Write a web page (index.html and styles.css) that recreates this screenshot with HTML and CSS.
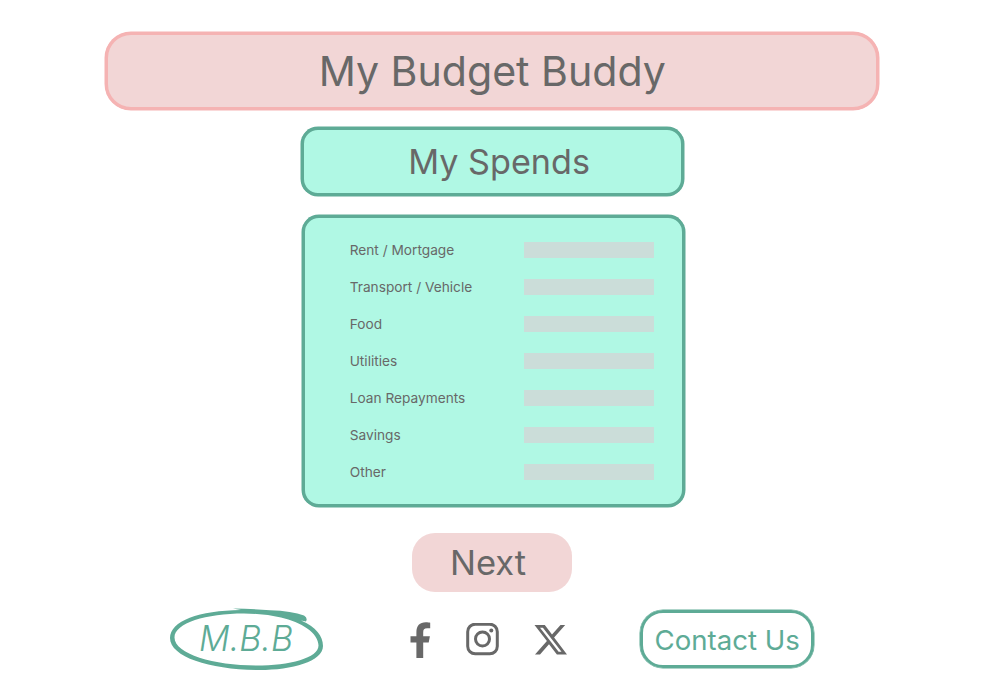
FILE: index.html
```html
<!DOCTYPE html>
<html lang="en">
<head>
<meta charset="utf-8">
<title>My Budget Buddy</title>
<link rel="stylesheet" href="styles.css">
</head>
<body>
<header class="banner"><h1>My Budget Buddy</h1></header>
<main>
  <h2 class="heading">My Spends</h2>
  <form class="panel">
    <label class="row"><span>Rent / Mortgage</span><input class="field" type="text"></label>
    <label class="row"><span>Transport / Vehicle</span><input class="field" type="text"></label>
    <label class="row"><span>Food</span><input class="field" type="text"></label>
    <label class="row"><span>Utilities</span><input class="field" type="text"></label>
    <label class="row"><span>Loan Repayments</span><input class="field" type="text"></label>
    <label class="row"><span>Savings</span><input class="field" type="text"></label>
    <label class="row"><span>Other</span><input class="field" type="text"></label>
  </form>
  <button class="next" type="button">Next</button>
</main>
<footer class="footer">
  <svg class="logo" width="156" height="66" viewBox="168 606 156 66">
    <path class="ring" fill-rule="evenodd" d="M233 608.5 Q252 608.7 270 610.3 Q292 611 304 615.5 Q308 618 306 621.5 L301 620.5 C316 627 323 636 323 646 C323 662 290 670.5 257 670 C210 669.5 170 657 170 638 C170 621 199 610.5 241 610 Z M244 613.500 C206 613.500 174.500 623 174.500 637.500 C174.500 654 214 665.500 256 665.500 C290 665.500 318.500 658 318.500 645.500 C318.500 633 301 622 281 617.500 Q264 613.500 244 613.500 Z"/>
    <text class="initials" x="199" y="651" textLength="94" lengthAdjust="spacingAndGlyphs">M.B.B</text>
  </svg>
  <nav class="social">
    <svg width="22" height="36" viewBox="0 0 22 36"><path d="M6.400 36V20.600H.5v-6.300h5.900v-4C6.400 3.700 9.600.3 15.800.3c1.800 0 3.500.2 4.400.4v5.500h-3c-3.100 0-4 1.400-4 4.200v3.900h6.700l-1.200 6.300h-5.500V36z"/></svg>
    <svg width="34" height="34" viewBox="0 0 34 34" class="outline"><rect x="1.700" y="1.200" width="29.600" height="29.600" rx="7.500"/><circle cx="16.500" cy="16" r="7"/><circle class="dot" cx="25.300" cy="7.500" r="2"/></svg>
    <svg width="34" height="32" viewBox="0 0 34 32"><path fill-rule="evenodd" d="M.5 1H10.800L18 10.600 26.500 1H31.200L20.100 13.500 33 30.500H22.900L15 20.200 6 30.500H1L12.900 17zM6 3.800 24.600 27.700H27.500L8.900 3.800z"/></svg>
  </nav>
  <a class="contact">Contact Us</a>
</footer>
</body>
</html>
```
FILE: styles.css
```css
* { box-sizing: border-box; }
body {
  margin: 0;
  padding-top: 32px;
  background: #fff;
  color: #686868;
  font-family: Inter, sans-serif;
  font-weight: 400;
}
h1, h2 { margin: 0; font-weight: 400; }
.banner {
  width: 774px;
  height: 77.500px;
  margin-left: 105.300px;
  border: 3px solid #f5b3b3;
  border-radius: 26px;
  box-shadow: 0 0 0 .5px #f5b3b3;
  background: #f2d6d6;
  display: flex;
  align-items: center;
  justify-content: center;
}
.banner h1 { font-size: 41.100px; line-height: 50px; }
main { display: flex; flex-direction: column; align-items: flex-start; }
.heading {
  width: 383px;
  height: 69px;
  margin: 17.500px 0 0 300.600px;
  border: 3px solid #5eab96;
  border-radius: 17px;
  box-shadow: 0 0 0 .5px #5eab96;
  background: #b0f8e4;
  font-size: 34.200px;
  line-height: 63px;
  padding-left: 14px;
  text-align: center;
}
.panel {
  width: 383px;
  height: 291.500px;
  margin: 19px 0 0 301.500px;
  border: 3px solid #5eab96;
  border-radius: 17px;
  box-shadow: 0 0 0 .5px #5eab96;
  background: #b0f8e4;
  padding: 13px 27.500px 0 45.200px;
}
.row {
  height: 37px;
  display: flex;
  align-items: center;
  justify-content: space-between;
  font-size: 13.700px;
}
.row span { padding-top: .5px; }
.field {
  width: 130.500px;
  height: 16px;
  border: 0;
  padding: 0 4px;
  background: #cbddd9;
}
.next {
  width: 160px;
  height: 59px;
  margin: 26px 0 0 412px;
  padding: 0 8px 0 0;
  border: 0;
  border-radius: 23px;
  background: #f2d6d6;
  color: #686868;
  font: 400 34.500px/59px Inter, sans-serif;
}
.footer {
  display: flex;
  align-items: flex-start;
  width: 814.200px;
  padding-left: 168px;
  margin-top: 14px;
}
.logo { fill: #5eab96; }
.initials {
  font: italic 300 35px Inter, sans-serif;
}
.social {
  display: flex;
  align-items: center;
  gap: 34px;
  height: 68px;
  margin-left: 86px;
  fill: #686868;
}
.outline { fill: none; stroke: #686868; stroke-width: 3; }
.outline .dot { fill: #686868; stroke: none; }
.contact {
  width: 174px;
  height: 58px;
  margin: 4.500px 0 0 auto;
  border: 3px solid #5eab96;
  border-radius: 23px;
  box-shadow: 0 0 0 .5px #5eab96;
  color: #5eab96;
  font-size: 27.600px;
  line-height: 54px;
  text-align: center;
}
```
